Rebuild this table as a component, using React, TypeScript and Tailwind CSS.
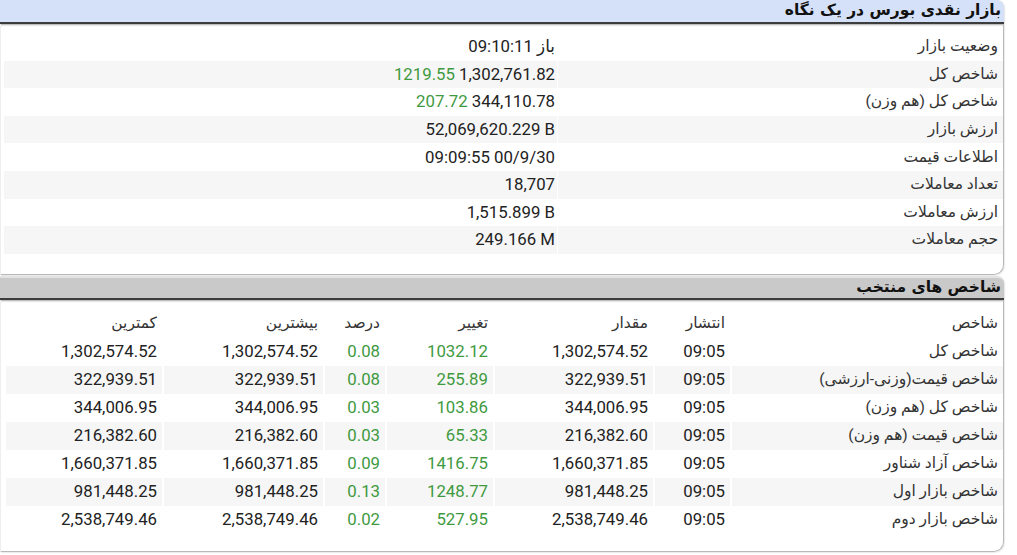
import React from 'react'

const summaryRows: { label: string; value: React.ReactNode }[] = [
  { label: 'وضعیت بازار', value: <>09:10:11 باز</> },
  { label: 'شاخص کل', value: <><span className="text-[#3f9a3f]">1219.55</span> 1,302,761.82</> },
  { label: 'شاخص کل (هم وزن)', value: <><span className="text-[#3f9a3f]">207.72</span> 344,110.78</> },
  { label: 'ارزش بازار', value: <>52,069,620.229 B</> },
  { label: 'اطلاعات قیمت', value: <>09:09:55 00/9/30</> },
  { label: 'تعداد معاملات', value: <>18,707</> },
  { label: 'ارزش معاملات', value: <>1,515.899 B</> },
  { label: 'حجم معاملات', value: <>249.166 M</> },
]

const indexRows = [
  ['شاخص کل', '09:05', '1,302,574.52', '1032.12', '0.08', '1,302,574.52', '1,302,574.52'],
  ['شاخص قیمت(وزنی-ارزشی)', '09:05', '322,939.51', '255.89', '0.08', '322,939.51', '322,939.51'],
  ['شاخص کل (هم وزن)', '09:05', '344,006.95', '103.86', '0.03', '344,006.95', '344,006.95'],
  ['شاخص قیمت (هم وزن)', '09:05', '216,382.60', '65.33', '0.03', '216,382.60', '216,382.60'],
  ['شاخص آزاد شناور', '09:05', '1,660,371.85', '1416.75', '0.09', '1,660,371.85', '1,660,371.85'],
  ['شاخص بازار اول', '09:05', '981,448.25', '1248.77', '0.13', '981,448.25', '981,448.25'],
  ['شاخص بازار دوم', '09:05', '2,538,749.46', '527.95', '0.02', '2,538,749.46', '2,538,749.46'],
]

const headers = ['شاخص', 'انتشار', 'مقدار', 'تغییر', 'درصد', 'بیشترین', 'کمترین']

function PanelHeader({ title, blue }: { title: string; blue?: boolean }) {
  return (
    <div
      className={
        'h-[24px] flex items-center pr-[3px] rounded-tr-[7px] border-b-2 border-[#3c3c3c] shadow-[0_1px_2px_rgba(0,0,0,0.35)] ' +
        (blue ? 'bg-[#d5e1f8]' : 'bg-[#c9c9c9] border-t-2 border-t-[#e2e2e2]')
      }
    >
      <span className="font-bold text-[15.5px] leading-none text-[#111] font-['DejaVu_Sans',sans-serif]">{title}</span>
    </div>
  )
}

export default function App() {
  return (
    <div dir="rtl" className="w-[1017px] h-[555px] bg-white pr-[13px] overflow-hidden font-['Roboto','DejaVu_Sans',sans-serif] text-[#222]">
      {/* بازار نقدی */}
      <PanelHeader title="بازار نقدی بورس در یک نگاه" blue />
      <div className="h-[251px] pt-[9px] pl-[3px] border-r border-b border-l border-l-[#eeeeee] border-[#b9b9b9] rounded-br-[10px] shadow-[1px_1px_1px_rgba(0,0,0,0.08)]">
        {summaryRows.map((r, i) => (
          <div key={i} className={'grid grid-cols-[445px_1fr] h-[27.6px] ' + (i % 2 ? 'bg-[#f6f6f6]' : '')}>
            <div className="flex items-center pr-[5px] text-[15.5px] text-[#333]">{r.label}</div>
            <div dir="ltr" className="flex items-center justify-end pr-[2px] border-r border-white text-[16.8px]">
              <span>{r.value}</span>
            </div>
          </div>
        ))}
      </div>

      {/* شاخص های منتخب */}
      <div className="mt-[1px]">
        <PanelHeader title="شاخص های منتخب" />
      </div>
      <div className="h-[252px] pt-[10px] pl-[3px] border-r border-b border-l border-l-[#eeeeee] border-[#b9b9b9] rounded-br-[10px] shadow-[1px_1px_1px_rgba(0,0,0,0.08)]">
        <div className="grid grid-cols-[273px_77px_160px_108px_62px_161px_1fr] h-[28px]">
          {headers.map((h, i) => (
            <div key={i} className="flex items-center pr-[5px] text-[15.5px] text-[#333]">{h}</div>
          ))}
        </div>
        {indexRows.map((row, i) => (
          <div key={i} className="grid grid-cols-[273px_77px_160px_108px_62px_161px_1fr] h-[28px]">
            {row.map((c, j) => (
              <div
                key={j}
                className={
                  'flex items-center pr-[5px] border-l-2 border-white ' +
                  (j === 0 ? 'text-[15.5px] text-[#333] ' : 'text-[16.8px] ') +
                  (j === 3 || j === 4 ? 'text-[#3f9a3f] ' : '') +
                  (i % 2 ? 'bg-[#f6f6f6]' : '')
                }
              >
                <span dir={j === 0 ? 'rtl' : 'ltr'}>{c}</span>
              </div>
            ))}
          </div>
        ))}
      </div>
    </div>
  )
}
